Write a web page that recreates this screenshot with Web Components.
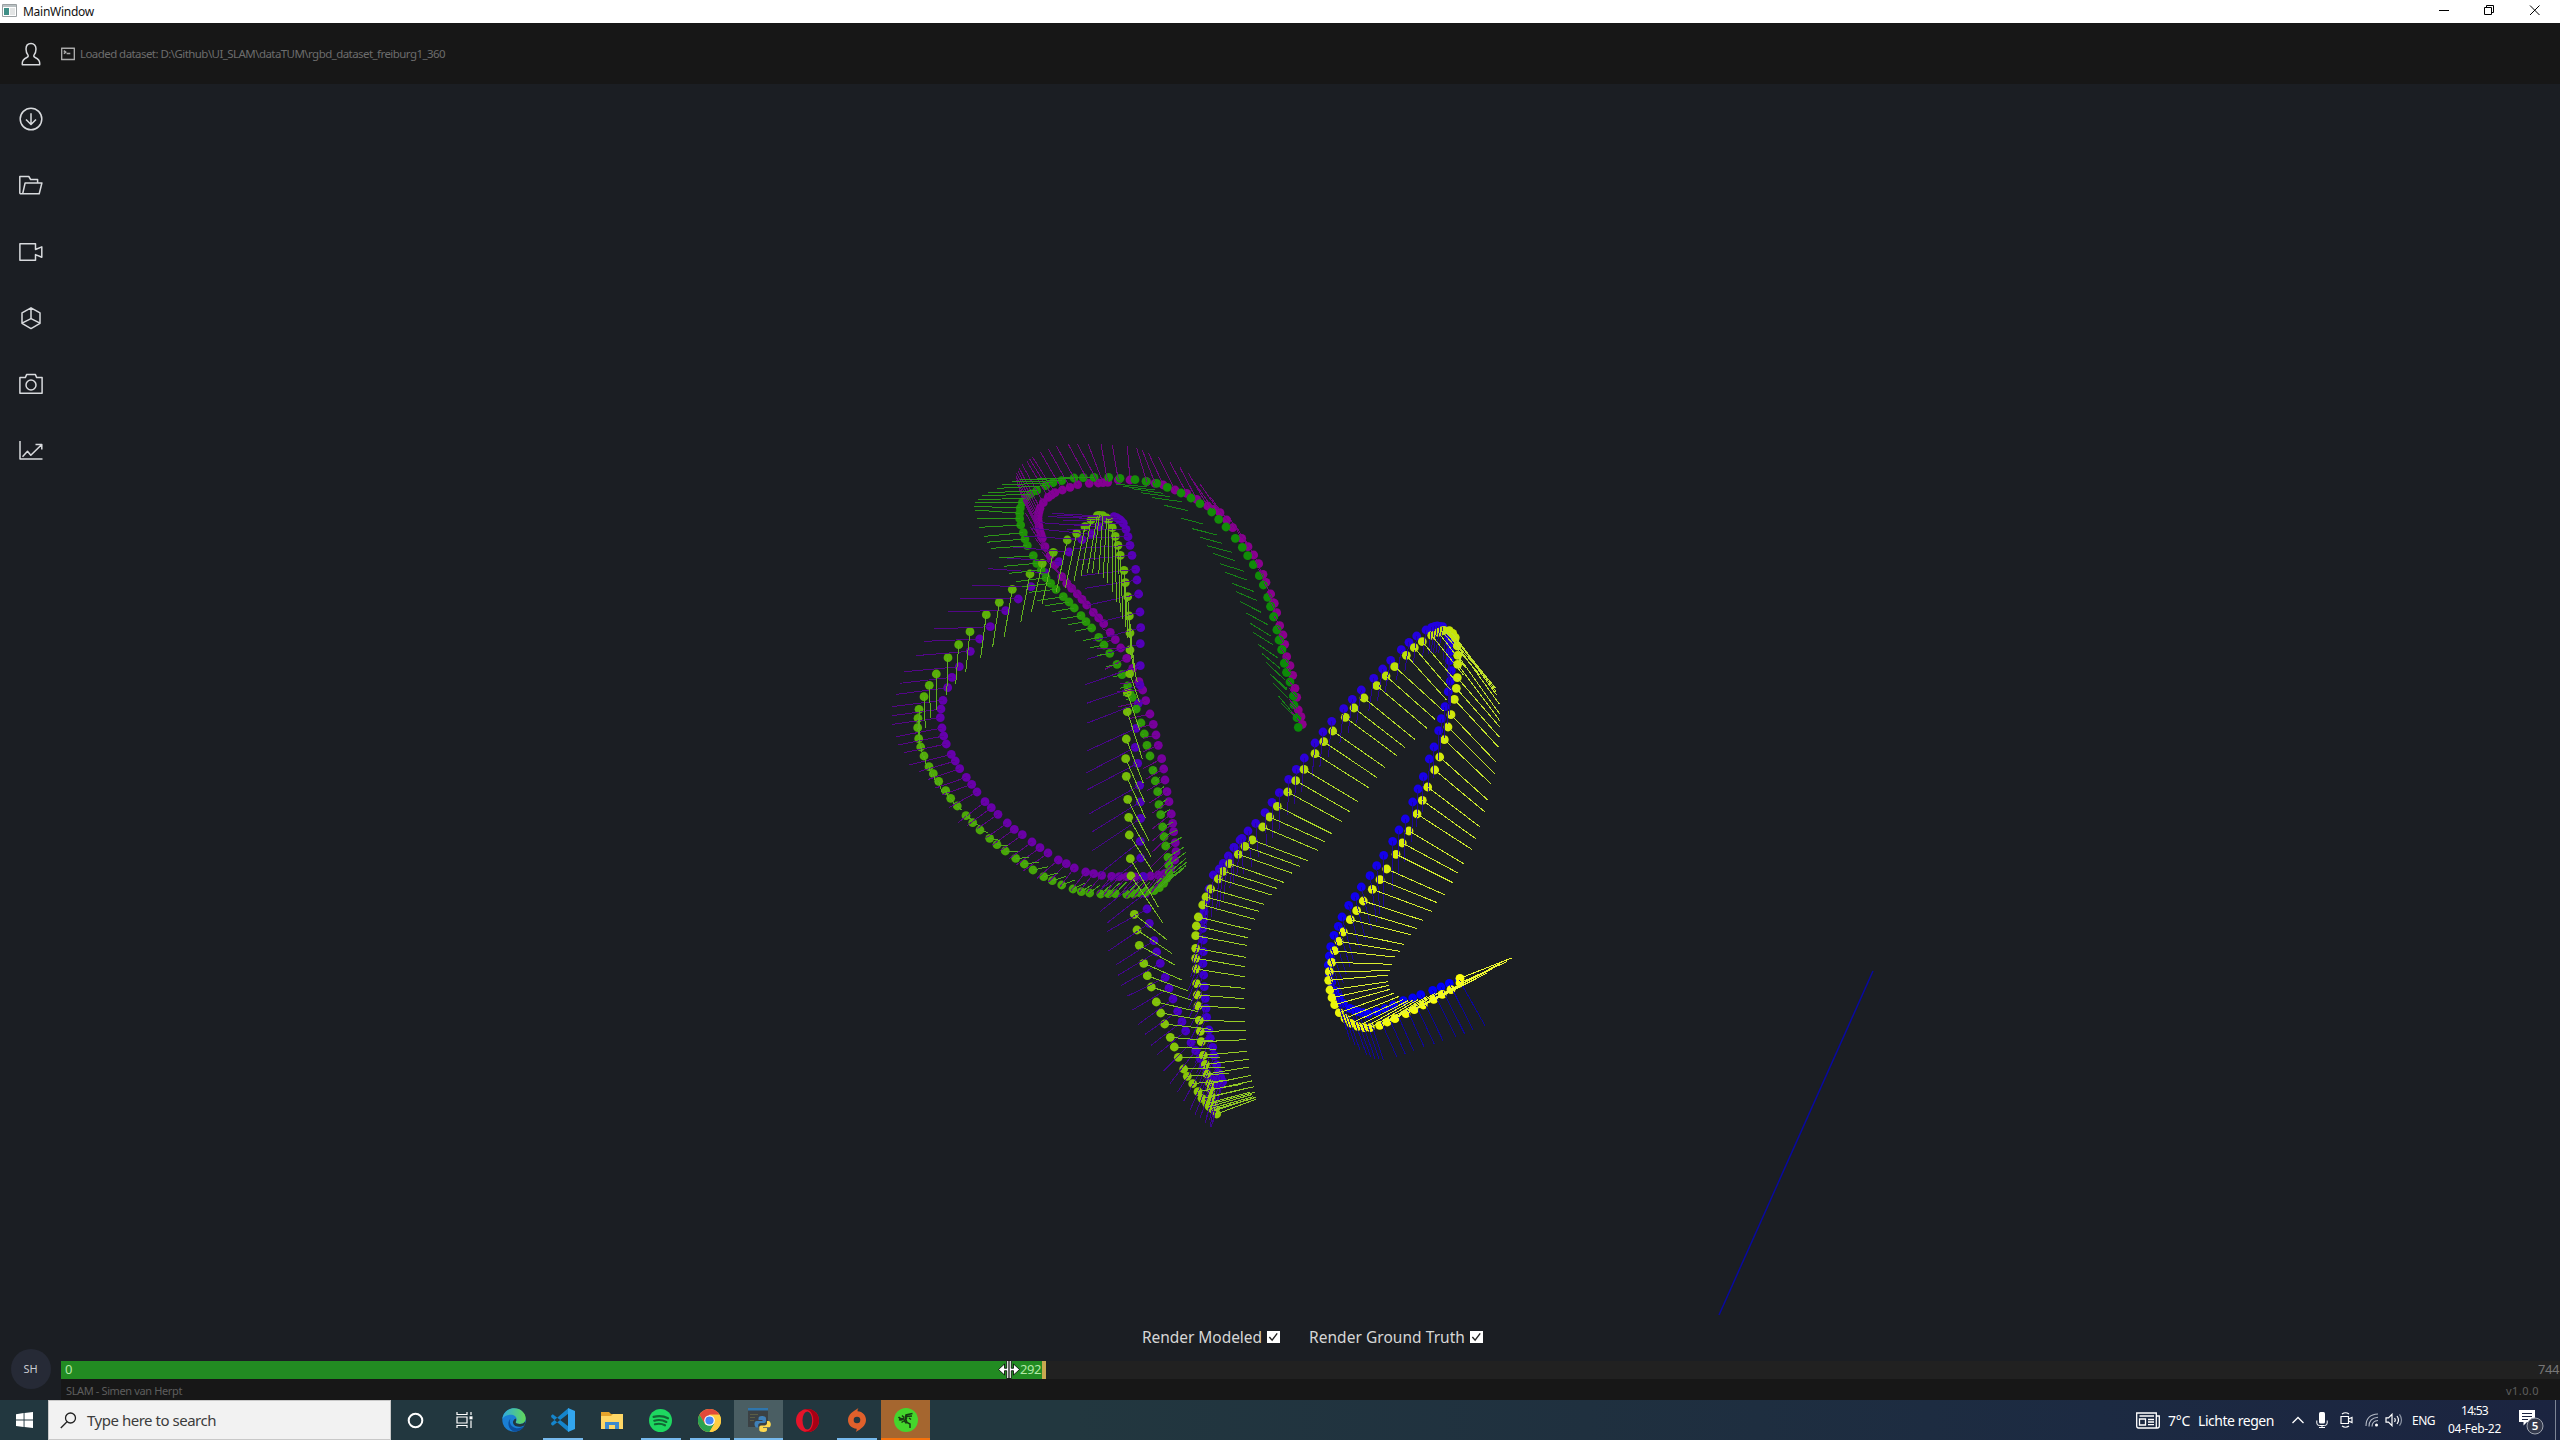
<!DOCTYPE html>
<html lang="en">
<head>
<meta charset="utf-8">
<title>MainWindow</title>
<style>
html,body{margin:0;height:100%;overflow:hidden;background:#1b1e23}
</style>
</head>
<body>
<slam-desktop></slam-desktop>
<script>
const define = (name, html, after) => {
  const tpl = document.createElement('template');
  tpl.innerHTML = html;
  customElements.define(name, class extends HTMLElement {
    constructor() { super(); this.attachShadow({ mode: 'open' }).append(tpl.content.cloneNode(true)); }
    connectedCallback() { if (after) after(this, this.shadowRoot); }
  });
};

/* Text run whose tracking is adjusted so that it spans the width in "w". */
define('fit-text', `<style>:host{display:block;white-space:nowrap;flex:none}span{display:inline-block}</style><span><slot></slot></span>`,
  (el, root) => {
    const w = +el.getAttribute('w'), s = root.querySelector('span');
    const n = el.textContent.length;
    s.style.letterSpacing = ((w - s.getBoundingClientRect().width) / n).toFixed(3) + 'px';
    el.style.width = w + 'px';
  });

const icons = {
  user: ['0 0 24 24', '<path d="M12 1.5c-3 0-5 2.200-5 5.500 0 2.800 1 4.800 2 6.100.5.900.1 1.700-1 2.300-2.700 1.300-4.700 2.200-4.700 5.600v1.800h17.400V21c0-3.400-2-4.300-4.700-5.600-1.100-.6-1.500-1.400-1-2.300 1-1.300 2-3.300 2-6.100 0-3.300-2-5.500-5-5.500z"/>'],
  down: ['0 0 24 24', '<circle cx="12" cy="12" r="10.800"/><path d="M12 6.200v11.200M7 12.500l5 5 5-5"/>'],
  folder: ['0 0 24 24', '<path d="M.8 20.700V3.500h9l1.800 3h7V10M.8 20.700h19.400L22.900 10H6.100L3.700 20.700"/>'],
  video: ['0 0 24 24', '<path d="M.9 3.700h15.600v5.800l6.300-2.600v10.400l-6.300-2.700v5.600H.9z"/>'],
  cube: ['0 0 24 24', '<path d="M12 1.800l9 5.100v10.400l-9 5.300-9-5.300V6.900zM12 1.800v10.800M12 12.600l9 4.600M12 12.600l-9 4.600"/>'],
  camera: ['0 0 24 24', '<path d="M.9 21.300V5.600h5.400l1.400-3.200h8.600l1.400 3.200h5.400v15.700z"/><circle cx="12" cy="13" r="5"/>'],
  chart: ['0 0 24 24', '<path d="M1 3v18h22.500M3.500 18.800l5-5.500 3.300 4L22.500 6.700M16.500 6.400h6.300v5"/>'],
  term: ['0 0 14 14', '<path d="M.6 1.200h12.800v11.300H.6zM2.800 3.600l2 1.500-2 1.500M5.600 6.600h3.700"/>']
};
define('line-icon', `<style>:host{display:block;flex:none;color:#d8dadd}svg{display:block;width:100%;height:100%;fill:none;stroke:currentColor;stroke-width:1.5;stroke-linejoin:round}</style><svg></svg>`,
  (el, root) => {
    const [box, d] = icons[el.getAttribute('name')], s = root.querySelector('svg');
    s.setAttribute('viewBox', box); s.innerHTML = d;
  });

define('title-bar', `<style>
:host{display:flex;height:23px;background:#fff;align-items:center;color:#111;font:12px "Noto Sans",sans-serif;box-sizing:border-box;padding-left:2px}
.app{width:15px;height:13px;margin:0 6px 2px 0}.sp{flex:1}.c{display:block;margin-bottom:3px}
</style>
<svg class="app" viewBox="0 0 15 13"><path fill="#fff" stroke="#9aa0a2" d="M.5.500h14v12H.5z"/><path fill="#b9c0c2" d="M1 1h13v2H1z"/><path fill="#3f8f86" d="M2 4h5v7H2z"/><path fill="#e3e5e5" d="M8 4h5v7H8z"/></svg>
<fit-text w="71">MainWindow</fit-text><span class="sp"></span>
<svg class="c" width="121" height="12" viewBox="0 0 121 12" fill="none" stroke="#000"><path d="M0 6.500h10M45.500 3.500h7v7h-7zM47.500 3.500v-2h7v7h-2M91 1.500l9.500 9.500M100.500 1.500L91 11"/></svg>`);

define('app-header', `<style>
:host{display:flex;height:61px;background:#171717;align-items:center;box-sizing:border-box;padding-left:19px;color:#6c6c6c;font:11.500px "Noto Sans",sans-serif}
.u{width:24px;height:24px}.t{width:14px;height:14px;margin:0 5px 0 18px;color:#aaa}
</style><line-icon class="u" name="user"></line-icon><line-icon class="t" name="term"></line-icon>
<fit-text w="365">Loaded dataset: D:\\Github\\UI_SLAM\\dataTUM\\rgbd_dataset_freiburg1_360</fit-text>`);

define('side-nav', `<style>
:host{display:flex;flex-direction:column;width:61px;flex:none;padding-top:23px;align-items:center;justify-content:space-between;box-sizing:border-box}
.i{display:flex;flex-direction:column;gap:42.300px}line-icon{width:24px;height:24px}
.a{width:40px;height:40px;border-radius:50%;background:#262a36;color:#c9cbd0;font:11px/40px "Noto Sans",sans-serif;text-align:center;margin-bottom:11px}
</style><div class="i"><line-icon name="down"></line-icon><line-icon name="folder"></line-icon><line-icon name="video"></line-icon><line-icon name="cube"></line-icon><line-icon name="camera"></line-icon><line-icon name="chart"></line-icon></div><div class="a">SH</div>`);

/* Camera trajectories. Blocks start with an "@originX,originY" marker; points
   are "x,y" in thirds of a pixel, and "x,y>ex,ey" also gives the tip of the
   viewing direction, which is interpolated for the points in between. */
const modeled = `@1180,600 355,382 351,353 342,315 340,288 330,246 320,217 313,190 305,149 297,120 291,89 281,50 272,20
@880,430 1220,727 1214,699 1206,659 1199,630 1191,600 1181,561 1172,529 1163,502 1150,465 1138,437 1120,404 1103,377 1087,352 1066,325 1038,291 1016,268 995,246 960,221 933,204 903,189 862,172 830,160 798,154 765,149 720,145 686,142 642,142>470,146 610,143 582,144>420,150 545,152>395,155 519,158>367,165 497,167>350,175 470,182>325,188 452,192 437,204>293,210 427,218 421,234 419,250>285,240 419,266 422,285>298,292 430,308>313,319 435,327 442,347>333,355 460,377>357,384 470,400>372,409 484,420>387,430 498,443>408,455 512,460 528,478>447,487 550,500>470,512 567,516 583,534>517,545 603,557 618,575>563,584 635,594 656,622>610,632 672,645 689,670>652,677 711,703>678,710 726,734 743,768>720,775
@880,660 750,100 757,112 769,147 783,189>770,195 793,222 801,256 810,288 819,331 826,363 833,395>852,380 837,434 842,464 848,501>880,485 852,530 857,558>905,532 864,592 866,615 866,638>918,595 860,655 851,670 838,683>912,625 822,692 800,696 780,699>810,665 760,701 740,703 706,701>740,665 685,701 662,702 629,699 604,695>635,675 579,687 545,675>585,660 517,662 491,650 459,630>505,620 433,612 407,595 376,573>415,575 351,554 329,535 300,510>325,518 278,488 258,467 232,438>245,450 212,415 197,392 176,364>185,395 160,341 147,320 132,288>140,320 122,261 116,236>125,270 113,203 114,175 117,148>120,210 132,110>136,203 148,76>152,175 169,42>169,150
@880,430 204,683>200,795 236,644>227,763 270,605>257,727 319,554>302,685 358,517>338,652 397,478>373,620 450,432>422,577 487,400>454,547 520,367>487,521 562,330>529,485 590,310>556,473 615,290>582,452 633,270>603,437 652,257>622,430 658,256>638,428 668,257>656,433 680,264>669,445 686,270>683,460 697,293>697,487 706,319>709,515 714,346>721,545 721,376>729,568 732,421>738,590 736,458 743,500>752,660 748,558 750,609>765,720 750,660 749,731>778,815
@880,660 742,98 742,155>787,296 739,237>790,370 737,296>793,425 739,349>797,475 743,418>806,542 746,472>813,590 748,525>820,637 751,596>836,742 753,648>848,788
@1080,840 163,223>263,301 171,270>275,340 178,316>287,376 191,370>307,421 202,407>323,452 214,441>336,481 229,486>354,515 242,519 254,552>392,568 271,592 283,621>407,628 295,652>420,652 311,687>435,682 322,709 338,731>463,718 354,755 366,775>500,745 380,790>510,757 388,800>515,764 395,805>520,770 403,812>524,773 410,822>527,778 405,808>527,772 400,790>525,757 395,770>522,740 392,750 389,731>513,706 380,702>508,681 376,673>507,658 370,646>500,634 364,605>497,599 361,574>497,572 358,541>495,545 354,498>494,505 352,465>492,476 350,431>494,445 349,387>494,410 347,355>494,380 347,325>497,352 347,287>500,316 349,258>503,293 355,231>512,269 368,195>525,238 378,171>536,214 392,147>551,193 415,117>575,165 430,94>592,146 449,71>611,127 475,43>637,100 495,19>659,79 517,0>683,62
@1180,600 248,681>413,751 269,651>434,725 292,619>455,701 323,576>486,665 347,542>509,635 372,508>533,605 405,461>566,563 431,425>590,532 458,393>614,502 496,352>650,467 522,324>674,442 552,294>704,418 590,257>741,385 618,228>765,358 644,200>790,333 679,166>800,300 703,143>812,270 727,125>825,240 755,106>850,225 775,97>858,205 785,93>900,225 792,91>925,240 808,92>947,265 818,100>948,275 826,113>950,285 832,138>958,312 833,166>959,342 833,193>959,362 832,233>959,380 829,265>959,412 823,298>956,442 813,344>947,485 804,381>944,521 793,419>935,553 779,471>922,599 764,510>914,635 743,561>899,680 727,601>887,716 711,642>875,748 687,693>853,792 667,729>836,820
@1300,820 288,103>458,188 260,147>434,224 240,179>412,248 217,208>395,274 190,243>368,301 170,272>350,325 151,299>332,344 130,336>311,373 117,364>300,394 104,392>284,411 95,427>275,433 88,455>269,452 86,481>264,465 90,510>264,485 96,533>267,496 104,554>269,508 118,578>283,519 135,595 152,610>310,538 173,619 193,623>340,540 211,623 239,616>380,530 262,606 285,596>430,510 318,581 343,569>500,490 370,555 401,538>560,460 427,523 453,509>600,430 480,489>620,425 480,475>635,414`;

const arcLines = `@880,430 708,163,800,170 730,169,825,180 755,176,850,190 783,188,870,200 817,203,905,215 853,226,925,242 904,265,970,282 937,296,1012,315 961,322,1025,340 981,347,1055,367 1000,370,1065,392 1020,401,1092,424 1035,427,1100,450 1056,460,1123,485 1068,485,1132,512 1081,515,1143,547 1099,549,1165,585 1111,580,1172,618 1119,607,1180,645 1134,643,1195,685 1145,670,1200,715 1158,697,1215,750 1171,733,1220,775
@1180,600 271,223,320,270 280,250,325,295 295,287,335,335 304,310,350,355`;

const truth = `@1180,600 367,373>330,330 363,350 355,330 350,292 345,265>325,240 338,226 330,197 320,170 314,133 309,105 299,77 290,38>275,10 283,10
@880,430 1180,518 1172,492 1158,457 1149,433 1136,401>1110,355 1121,375 1104,350 1085,325>1050,265 1058,293>1020,240 1040,270 1020,248>960,162 1000,238>930,140 983,228>925,130 950,208>900,113 920,190>870,97 885,180>835,80 850,165>805,68 825,160 800,155>770,55 750,150>742,47 715,150>697,45 683,157>663,42 669,158>625,43 655,159>592,42 628,160>565,43 593,164>529,48 570,172>505,57 547,180>482,67 525,188>457,80 515,195 505,202>440,92 490,218 480,235>418,115 477,245 475,255>410,130 474,265 475,275>408,150 477,288 479,300 483,313 487,325>430,210 495,350 510,378>450,290 525,405 545,440 560,460>500,390 575,475 592,492 606,508>560,440 620,525 640,547 656,564 671,581>645,553 691,607 706,629>680,634 722,654>650,655 740,685>675,718 758,715 777,755>720,762
@880,660 788,90>710,95 797,122>715,140 810,162 820,193 828,225>790,235 835,256 845,296>790,325 851,327 855,360 861,395 867,425>815,460 874,462 878,490 881,515 886,548>815,620 888,575 884,600 872,625 855,640>800,715 835,645 812,648 790,650 765,651>710,715 740,650 718,650 695,649 665,646>620,700 641,641 617,636 583,624>540,680 559,611 535,600 504,579>430,633 480,563 456,546 427,524>360,573 403,508 382,489 354,463>290,507 334,443 315,425>235,487 291,396 275,373>185,405 259,352 239,326>145,358 226,303 214,283>88,315 199,252>72,278 191,228>53,255 186,204>48,230 181,173>37,193 183,147>37,167 189,121>37,140 203,83>48,103 216,52>60,70 238,20>72,35
@880,430 271,664>108,677 299,627>133,634 331,590>163,597 377,542>205,544 415,507>240,505 453,470>277,466 495,428>325,416 537,395>357,382 567,366>390,350 606,329>430,318 635,313>455,295 658,290>480,278 680,268>505,260 702,260>517,250 710,263>530,256 718,268>545,262 724,273 730,280>555,285 738,298>560,300 744,320 750,346 756,376>590,390 767,418>605,437 771,450>615,475 776,492>625,525 780,546>665,575 782,593>640,632 781,641>620,688 781,707>615,764
@880,660 780,75>620,130 775,130>620,190 768,205>620,273 766,262>617,340 773,310>620,390 779,376>625,463 781,426>637,515 782,475>637,572 781,544>660,640 782,594>660,690 790,650>660,755 795,700>680,790 801,747>680,815
@1080,840 208,250>85,333 222,302>107,375 230,336 241,370>123,437 256,412>143,468 267,445>157,510 279,477>175,553 293,514>195,583 306,545 317,573>230,645 333,608 347,632>270,730 360,655 370,678 380,700>330,810 390,712 400,720>360,835 408,730 415,735>390,860 422,735 428,725 422,712 417,700>380,830 410,675>375,780 403,647 398,622 391,595>350,700 387,570 380,532 378,505 376,475>330,560 373,440 371,405 369,370 370,335>325,450 370,300 368,265 370,240 372,215 378,180>370,270 387,147 400,105>395,230 418,87 430,70 445,48>430,180 462,22 480,0>470,110
@1180,600 162,743 186,715 204,693>215,800 227,670>235,770 255,638 276,607 298,578>297,690 326,538 349,508 373,474>365,575 405,429 429,396 455,364>445,470 491,326 517,298 544,270>530,370 581,235 608,207 632,181>615,275 664,149 687,127 710,108>700,190 738,90 755,82 764,79 772,78 780,79 788,80>775,160 800,95 806,112 810,130 810,155 809,182>805,290 814,212 811,243 805,275 795,320 784,356 776,392>775,480 762,441 748,477 730,530 714,567>710,680 698,606 676,657 657,690 638,724
@1300,820 251,106>250,260 230,137 210,167 184,201>215,330 165,230 146,256 126,291>160,420 115,319 102,346 92,380>130,490 88,408 85,435 88,462 95,487 105,512>150,660 118,532>165,675 130,550>180,690 150,565>200,705 162,570 175,575>225,715 190,578 205,582>250,720 230,575>290,710 255,566 280,555 310,542>372,680 338,534 362,524 398,511>468,650 423,501 448,490>520,632 478,480>555,617`;

const parse = src => {
  const pts = []; let ox = 0, oy = 0;
  for (const tok of src.trim().split(/\s+/)) {
    if (tok[0] === '@') { [ox, oy] = tok.slice(1).split(',').map(Number); continue; }
    const [p, e] = tok.split('>'), [x, y] = p.split(',').map(Number);
    const pt = { x: ox + x / 3, y: oy + y / 3 };
    if (e) { const [a, b] = e.split(',').map(Number); pt.v = [(a - x) / 3, (b - y) / 3]; }
    pts.push(pt);
  }
  let prev = -1;
  pts.forEach((p, i) => {
    if (!p.v) return;
    if (prev >= 0) for (let k = prev + 1; k < i; k++) {
      const f = (k - prev) / (i - prev), a = pts[prev].v;
      pts[k].w = [a[0] + (p.v[0] - a[0]) * f, a[1] + (p.v[1] - a[1]) * f];
    }
    prev = i;
  });
  return pts;
};

define('trajectory-plot', `<style>:host{display:block;position:absolute;inset:0;pointer-events:none}svg{display:block;width:100%;height:100%}</style><svg viewBox="0 0 2560 1440"></svg>`,
  (el, root) => {
    const draw = (pts, colour, lineColour) => {
      let dots = '', lines = '';
      pts.forEach((p, i) => {
        const t = Math.pow(i / (pts.length - 1), 1.4), v = p.v || p.w;
        dots += `<circle cx="${p.x.toFixed(1)}" cy="${p.y.toFixed(1)}" r="4.400" fill="${colour(t)}"/>`;
        if (v) lines += `<path d="M${p.x.toFixed(1)} ${p.y.toFixed(1)}l${v[0].toFixed(1)} ${v[1].toFixed(1)}" stroke="${lineColour(t)}"/>`;
      });
      return [dots, lines];
    };
    const r = Math.round;
    const [md, ml] = draw(parse(modeled), t => `rgb(${r(10 + 245 * t)},${r(136 + 119 * t)},8)`, t => `rgb(${r(25 + 215 * t)},${r(140 + 110 * t)},${r(20 + 30 * t)})`);
    const [td, tl] = draw(parse(truth), t => `rgb(${r(140 * (1 - t))},0,${r(140 + 112 * t)})`, t => `rgb(${r(10 + 115 * (1 - t))},4,${r(135 + 35 * t)})`);
    let ox = 0, oy = 0, al = '';
    for (const tok of arcLines.split(/\s+/)) {
      if (tok[0] === '@') { [ox, oy] = tok.slice(1).split(',').map(Number); continue; }
      const [a, b, c, d] = tok.split(',').map(Number);
      al += `<path d="M${(ox + a / 3).toFixed(1)} ${(oy + b / 3).toFixed(1)}L${(ox + c / 3).toFixed(1)} ${(oy + d / 3).toFixed(1)}" stroke="#178217"/>`;
    }
    root.querySelector('svg').innerHTML = `<path d="M1873 971L1719 1315" stroke="#0909a0" stroke-width="1.500"/>${td}${md}<g shape-rendering="crispEdges" opacity=".9">${tl}</g><g shape-rendering="crispEdges">${ml}${al}</g>`;
  });

define('check-option', `<style>
:host{display:flex;align-items:center;color:#d6d6d6;font:15.500px "Noto Sans",sans-serif;gap:5px}
svg{display:block;width:13px;height:12px;margin-bottom:1px;background:#fff}
</style><slot></slot><svg viewBox="0 0 13 13"><path fill="none" stroke="#222" stroke-width="1.500" d="M2 6.500l3 3.500 5.500-7.500"/></svg>`);

define('frame-slider', `<style>
:host{display:flex;height:18px;background:#212121;color:#777;font:13px/17px "Noto Sans",sans-serif;position:relative}
.f{width:985px;box-sizing:border-box;background:#228b22;border-right:4px solid #c8a850;color:#b4e8a8;display:flex;justify-content:space-between;padding:0 1px 0 4px}
.s{flex:1}.e{padding-right:1px}
svg{position:absolute;left:937px;top:-1px;width:22px;height:19px}
</style><div class="f"><span>0</span><fit-text w="21">292</fit-text></div><div class="s"></div><fit-text class="e" w="21">744</fit-text>
<svg viewBox="0 0 22 19"><path fill="#fff" stroke="#000" stroke-width=".8" d="M.5 9.500L6.500 4v4.300h2.200V.5h4.600v7.800h2.200V4l6 5.500-6 5.500v-4.300h-2.200v7.800H8.700v-7.800H6.500V15z"/><path stroke="#000" stroke-width="1.200" d="M11 .5v18"/></svg>`);

define('main-view', `<style>
:host{display:flex;flex-direction:column;flex:1;min-width:0}
.st{flex:1}.opts{display:flex;height:24px;gap:29px;padding-left:1081px;margin-bottom:12px}
.foot{display:flex;justify-content:space-between;align-items:center;height:21px;background:#171717;color:#5e5e5e;font:11px "Noto Sans",sans-serif;padding:1px 21px 0 5px;box-sizing:border-box}
</style><div class="st"></div><div class="opts"><check-option><fit-text w="120">Render Modeled</fit-text></check-option><check-option><fit-text w="156">Render Ground Truth</fit-text></check-option></div>
<frame-slider></frame-slider><div class="foot"><fit-text w="116">SLAM - Simen van Herpt</fit-text><fit-text w="33">v1.0.0</fit-text></div>`);

define('task-button', `<style>
:host{display:flex;width:49px;height:40px;flex:none;align-items:center;justify-content:center;box-sizing:border-box;position:relative}
:host([open])::after{content:"";position:absolute;left:5px;right:4px;bottom:0;height:2px;background:#76b9ed}
:host([active]){background:#4a5e63}:host([active])::after{left:0;right:0}
:host([alert]){background:#a5662f}:host([alert])::after{content:"";position:absolute;left:0;right:0;bottom:0;height:2px;background:#f7720c}
</style><slot></slot>`);

define('task-bar', `<style>
:host{display:flex;height:40px;color:#fff;background:linear-gradient(90deg,#22373f 0,#22373f 42%,#1f303f 62%,#1c2a42 82%,#1b2440 100%);font:12px "Noto Sans",sans-serif;align-items:center}
svg{display:block;flex:none}
.win{width:48px}
.q{display:flex;align-items:center;width:343px;height:40px;box-sizing:border-box;background:#f2f2f2;border:1px solid #c8c8c8;color:#3c3c3c;font-size:15px;padding-left:11px;gap:10px}
.sp{flex:1}.clock{display:flex;flex-direction:column;align-items:center;gap:1px;line-height:17px;width:53px;margin:0 0 2px 13px}
</style>
<task-button class="win"><svg width="17" height="16" viewBox="0 0 17 16" fill="#fff"><path d="M0 2.200L7.600 1.100v6.500H0zM8.500 1L17 0v7.600H8.500zM0 8.500h7.600V15L0 13.900zM8.500 8.500H17V16l-8.500-1z"/></svg></task-button>
<div class="q"><svg width="17" height="17" viewBox="0 0 17 17" fill="none" stroke="#222" stroke-width="1.300"><circle cx="10.500" cy="6" r="5"/><path d="M7 9.700L.8 16"/></svg><fit-text w="129">Type here to search</fit-text></div>
<task-button><svg width="17" height="17" viewBox="0 0 17 17"><circle cx="8.500" cy="8.500" r="6.800" fill="none" stroke="#fff" stroke-width="2"/></svg></task-button>
<task-button><svg width="17" height="16" viewBox="0 0 17 16" fill="none" stroke="#fff" stroke-width="1.200"><path d="M1 0v2.500h10V0M1 16v-2.500h10V16M1 5h10v6H1zM15 0v3M15 8.500V16"/><path d="M13.500 4.300h3v3h-3z" fill="#fff" stroke="none"/></svg></task-button>
<task-button><svg width="24" height="24" viewBox="0 0 24 24"><defs><linearGradient id="e" x1="0" x2="1"><stop offset="0" stop-color="#2fa9e0"/><stop offset="1" stop-color="#62d957"/></linearGradient></defs><circle cx="12" cy="12" r="11.700" fill="#1a7fd4"/><path fill="url(#e)" d="M.4 11C1.200 4.500 6 .300 12 .300c7 0 11.700 5 11.700 10 0 3.800-2.700 5.700-5.700 5.700-2.500 0-4.300-.8-4.300-1.700 0-.8 1-1 1-3 0-2.500-2.700-4.500-6-4.500C5 6.800 1.800 8.500.400 11z"/><path fill="#0c4f9e" d="M8.500 10.500c-2 4 .5 9 6 9.700 3 .3 6-.8 7.800-2.200-2 3.500-5.500 5.700-9.800 5.700-5-1.500-8.500-8.200-4-13.200z"/><path fill="#22373f" d="M13.700 14.300c0 1 1.800 1.700 4.300 1.700 2 0 4-.8 5-2.500.3 2-.3 3.200-.8 4-3.700 2.300-10 1.800-11.200-2.500-.3-2 1-3.500 2.500-4.500 1.500 1.500.2 3 .2 3.800z"/></svg></task-button>
<task-button open><svg width="24" height="24" viewBox="0 0 24 24"><path fill="#1585cc" d="M0 7.800l1.800-1.500L17.500 18.500V24L.300 9.200zM0 16.200l1.800 1.500L17.500 5.500V0L.300 14.800z"/><path fill="#32a5ee" d="M17 0l7 3v18l-7 3z"/></svg></task-button>
<task-button><svg width="22" height="19" viewBox="0 0 22 19"><path fill="#e5a32b" d="M0 1h8l2 2h10v4H0z"/><path fill="#ffd766" d="M0 5h10l2-2h10v15H0z"/><path fill="#3d8ad0" d="M4 18v-7h14v7h-4v-4H8v4z"/></svg></task-button>
<task-button open><svg width="23" height="23" viewBox="0 0 24 24"><circle cx="12" cy="12" r="12" fill="#1ed760"/><path fill="none" stroke="#163" stroke-linecap="round" stroke-width="2.300" d="M4.800 8.200c5-1.400 10.700-.9 15 1.500M5.500 12.200c4.300-1.200 9-.7 12.600 1.300M6.200 15.900c3.600-.9 7.400-.6 10.500 1.100"/></svg></task-button>
<task-button open><svg width="23" height="23" viewBox="0 0 24 24"><circle cx="12" cy="12" r="12" fill="#ffcd42"/><path fill="#e2493a" d="M1.600 6A12 12 0 0122.400 6H12l-5.200 9z"/><path fill="#2aa350" d="M1.600 6A12 12 0 0012 24l5.200-9-9.400 1.500z"/><path fill="#ffcd42" d="M12 24a12 12 0 0010.400-18H12l5.200 9z"/><circle cx="12" cy="12" r="5.500" fill="#fff"/><circle cx="12" cy="12" r="4.300" fill="#4285f4"/></svg></task-button>
<task-button open active><svg width="24" height="24" viewBox="0 0 24 24"><path fill="#3b4144" d="M1 0h20v19H1z"/><path fill="#2f76ad" d="M1 0h20v2.500H1z"/><path stroke="#5b5d45" d="M3 6.500h8M3 9.500h5M3 12.500h4"/><path fill="#3f80b8" d="M15 8c-3 0-3.500 1-3.500 2.500V12h4v1H9.800C8 13 7.500 14.500 7.500 16s.7 3.500 2.300 3.500h1.400v-2c0-1.500 1-2.500 2.500-2.500h3.600c1 0 1.700-.8 1.700-2v-2.500C19 9 18 8 15 8z"/><path fill="#ffd94f" d="M16.500 24c3 0 3.500-1 3.500-2.500V20h-4v-.7h5.600c1.600 0 2.200-1.400 2.200-2.900S23 13 21.500 13H20v2c0 1.500-1 2.400-2.500 2.400H14c-1 0-1.700.8-1.700 1.900V22c0 1.200 1.200 2 4.200 2z"/></svg></task-button>
<task-button><svg width="23" height="23" viewBox="0 0 24 24"><ellipse cx="12" cy="12" rx="12" ry="12" fill="#e5142a"/><path fill="#a70014" d="M12 24a12 12 0 000-24c-2 0-3 .5-3 .5 6-.5 9 5 9 11.500s-3 12-9 11.500c0 0 1 .5 3 .5z"/><ellipse cx="11.800" cy="12" rx="5" ry="9.500" fill="#22373f"/></svg></task-button>
<task-button open><svg width="18" height="24" viewBox="0 0 18 24"><path fill="#e0602b" d="M10.500 0c-.8 1-1 2-.9 3.200 5 .3 8.400 4 8.400 8.800 0 5.500-5 9-10.200 12 .7-1.200 1-2.200.8-3.300C3.400 20.400 0 16.700 0 12 0 6.600 5.300 3 10.500 0z"/><circle cx="9" cy="12" r="3.300" fill="#22373f"/></svg></task-button>
<task-button alert><svg width="24" height="24" viewBox="0 0 24 24"><circle cx="12" cy="12" r="12" fill="#44d62c"/><path fill="none" stroke="#173a12" stroke-width="1.500" d="M4.500 9c1.500 2.500 3.500 2 5.500 1.500M5 11.500c2 1 3.500 .5 5-.5M11 11l1-4 6.500-1.500M12 8.500l6-.5M7.500 14.500l3-2 2.500-3M8 7.500l2 2M12 11.500l1 3 3 1.500v4M10.500 13l2 2.500M15 10l2 1.500"/></svg></task-button>
<span class="sp"></span>
<svg width="24" height="17" viewBox="0 0 24 17" fill="none" stroke="#fff" stroke-width="1.300"><path d="M.7 1h19.600v15H2.500Q.7 16 .700 14zM20.300 4h3v10q0 2-2 2h-2M3.500 7h6v6h-6zM12 7.500h6M12 10h6M12 12.700h6M3.500 4h14.500"/></svg>
<fit-text style="font-size:14px;margin-left:8px" w="22">7°C</fit-text><fit-text style="font-size:14px;margin-left:8px" w="76">Lichte regen</fit-text>
<svg style="margin-left:18px" width="12" height="8" viewBox="0 0 12 8" fill="none" stroke="#fff" stroke-width="1.300"><path d="M.5 7L6 1.500 11.500 7"/></svg>
<svg style="margin-left:12px" width="12" height="16" viewBox="0 0 12 16"><rect x="3" width="6" height="11.500" rx="1.500" fill="#fff"/><path fill="none" stroke="#fff" d="M.8 8.500v2.500q0 2.500 2.500 2.500h5.400q2.500 0 2.500-2.500V8.500M6 13v2.500M3 15.500h6"/></svg>
<svg style="margin-left:12px" width="13" height="16" viewBox="0 0 13 16" fill="none" stroke="#fff" stroke-width="1.200"><path d="M1 4.500h7.500v7H1zM8.500 7l3.500-1.500v5L8.500 9M2 2q3.500-2.500 7 0M2 14q3.500 2.500 7 0"/></svg>
<svg style="margin-left:12px" width="14" height="14" viewBox="0 0 14 14" fill="none" stroke="#b6bcc8" stroke-width="1.100"><path d="M1 13Q1 1.500 13 1M4 13.500Q4 5 13 4.300M7 13.500Q7 8 13 7.500"/><circle cx="11.500" cy="12" r="1.500" fill="#fff" stroke="none"/></svg>
<svg style="margin-left:6px" width="18" height="14" viewBox="0 0 18 14" fill="none" stroke="#fff" stroke-width="1.200"><path d="M1 4.800h2.500L7 1.300v11.400L3.500 9.200H1zM9.500 5q1.500 2 0 4M12 3q3 4 0 8"/><path stroke="#8d95a5" d="M14.500 1.300q4 5.700 0 11.400"/></svg>
<fit-text style="margin-left:9px" w="23">ENG</fit-text>
<div class="clock"><fit-text w="27">14:53</fit-text><fit-text w="53">04-Feb-22</fit-text></div>
<svg style="margin-left:18px;margin-right:11px;margin-top:5px" width="25" height="25" viewBox="0 0 25 25"><path fill="#fff" d="M0 0h16v12H8l-3.500 3.500V12H0z"/><path stroke="#1b2440" d="M3 3.500h10M3 6.500h10M3 9.500h6"/><circle cx="16" cy="16" r="8" fill="#33394c" stroke="#a0a5b0"/><text x="16" y="20.300" text-anchor="middle" fill="#fff" font-family="Noto Sans" font-weight="600" font-size="11.500">5</text></svg>
<svg width="5" height="40"><path stroke="#7d8595" d="M.5 0v40"/></svg>`);

define('slam-desktop', `<style>
:host{display:flex;flex-direction:column;width:2560px;height:1440px;background:#1b1e23;position:relative;overflow:hidden}
.body{display:flex;flex:1;min-height:0}
</style><title-bar></title-bar><app-header></app-header><div class="body"><side-nav></side-nav><main-view></main-view></div><task-bar></task-bar><trajectory-plot></trajectory-plot>`);
</script>
</body>
</html>
